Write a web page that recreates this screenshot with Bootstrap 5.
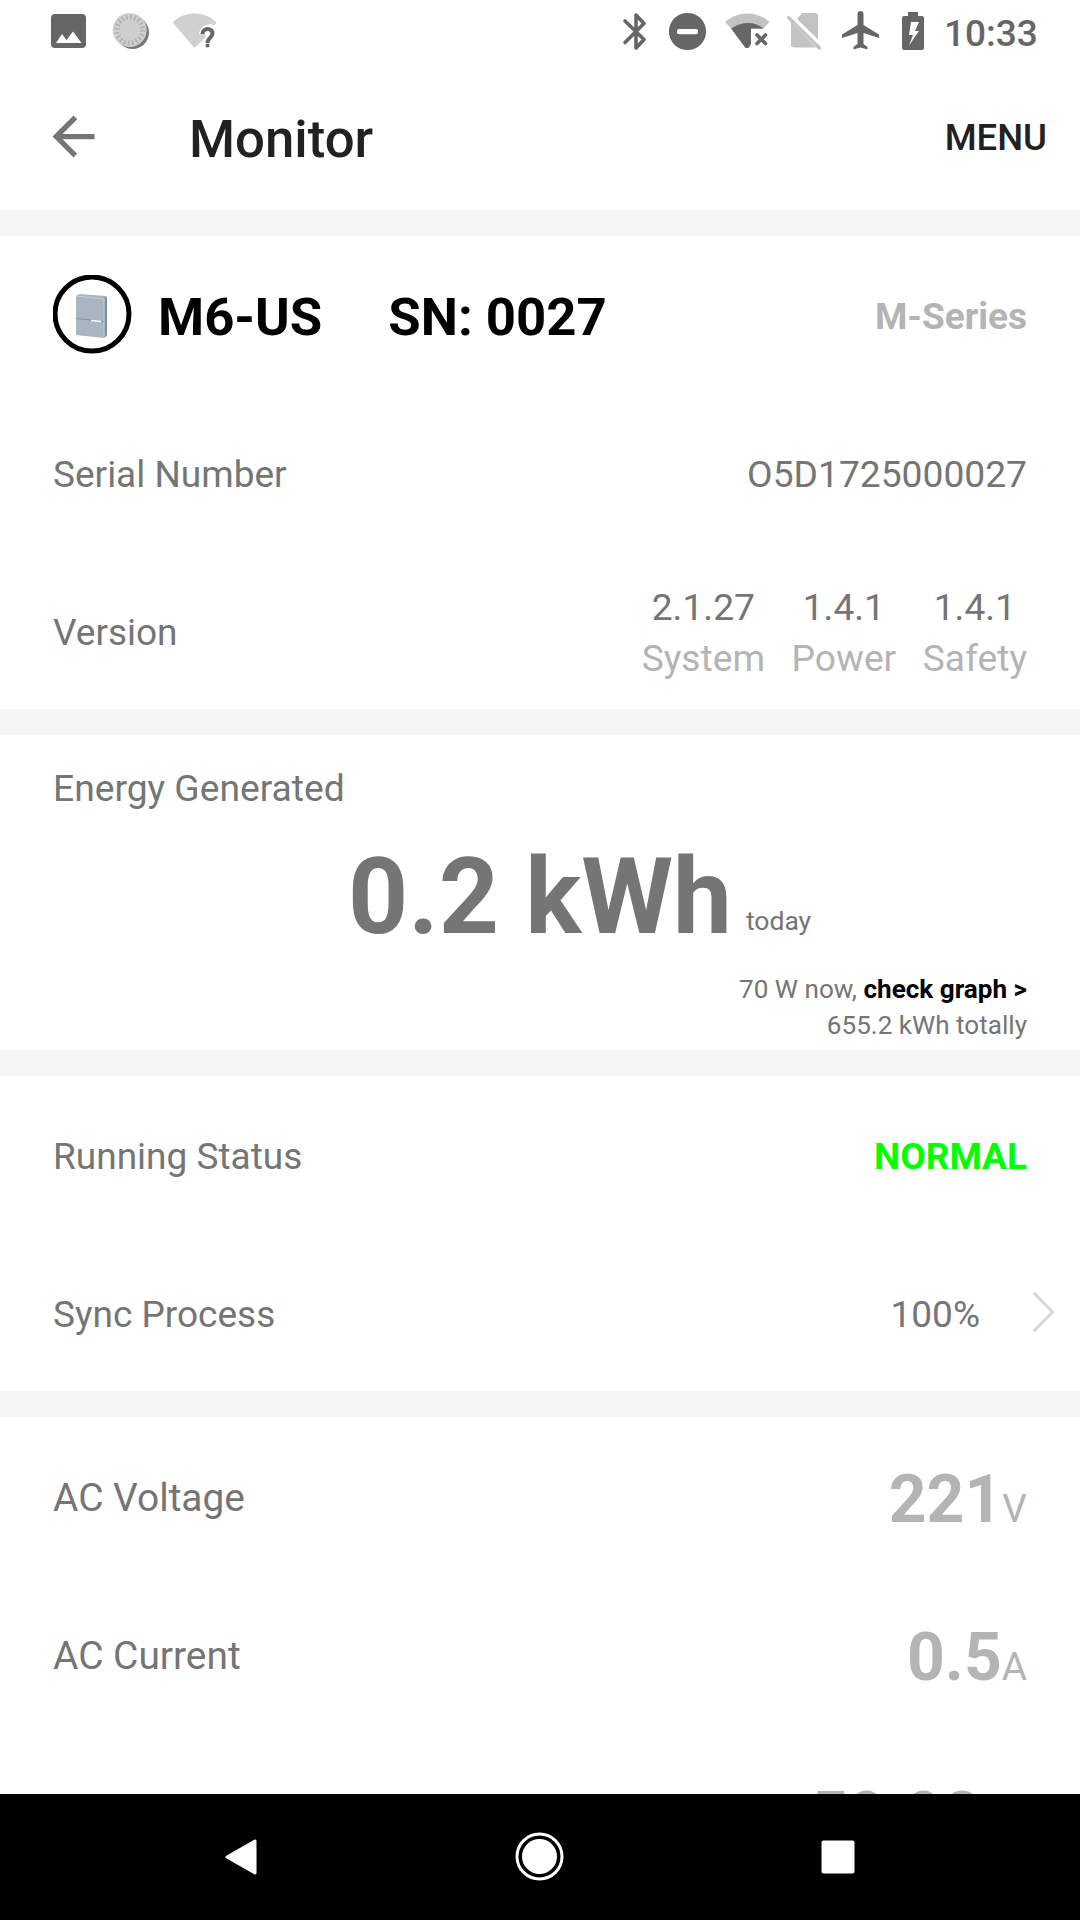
<!DOCTYPE html>
<html lang="en">
<head>
<meta charset="utf-8">
<meta name="viewport" content="width=device-width, initial-scale=1">
<title>Monitor</title>
<link href="https://cdn.jsdelivr.net/npm/bootstrap@5.3.0/dist/css/bootstrap.min.css" rel="stylesheet">
<style>
  body { font-family: Roboto, "Liberation Sans", sans-serif; font-size: 37px; line-height: 43px; color: #757575; background: #fff; }
  .screen { width: 1080px; height: 1920px; }
  svg { display: block; flex: none; }
  .status-strip { height: 63px; color: #666; }
  .status-strip .clock { width: 136px; font-weight: 500; padding-top: 3px; }
  .app-header { height: 147px; padding: 0 33px 0 42px; color: #212121; font-weight: 500; }
  .app-title { font-size: 52.7px; line-height: 62px; font-weight: 500; margin: 4px 0 0 84px; }
  .menu-label { font-size: 36.5px; padding-top: 2px; }
  .band { border-top: 26px solid #f5f5f5; }
  .item { height: 157.5px; padding: 0 53px; flex: none; }
  .item > span { padding-top: 5px; }
  .item > .series { padding-top: 3px; }
  .device-name { font-size: 52.7px; line-height: 62px; color: #000; padding: 4px 0 0 26px; }
  .serial-short { margin-left: 66px; }
  .soft { color: #b4b4b4; }
  .serial-full { font-size: 37.2px; }
  .versions { font-size: 37.2px; gap: 26.5px; line-height: 51px; padding-top: 6px; }
  .energy { height: 315px; padding: 32px 53px 0; }
  .energy-label { font-size: 37.2px; }
  .energy-total { display: grid; grid-template-columns: 1fr auto 1fr; font-size: 105px; line-height: 123px; margin-top: 26px; }
  .energy-note { font-size: 26.1px; line-height: 36px; }
  .energy-total .energy-note { font-size: 26.5px; padding: 0 0 20px 14px; }
  .energy-foot { margin-top: 12px; }
  .ok { color: #0f0; }
  .with-arrow { padding-right: 25px; }
  .percent { padding-top: 5px; }
  .arrow-gap { margin-left: 52px; }
  .item > .reading { font-size: 66px; line-height: 77px; padding-top: 18px; }
  .item > .reading-last { padding: 12px 46px 0 0; }
  .reading small { font-size: 38.7px; font-weight: 400; }
  .ac-label { font-size: 38.9px; }
  .nav-keys { height: 126px; background: #000; }
</style>
<script src="https://cdn.jsdelivr.net/npm/bootstrap@5.3.0/dist/js/bootstrap.bundle.min.js"></script>
</head>
<body>
<div class="screen d-flex flex-column overflow-hidden">
  <div class="status-strip d-flex align-items-center justify-content-between flex-shrink-0">
    <div class="d-flex">
      <svg width="230" height="63" viewBox="0 0 230 63">
        <path fill="#666" fill-rule="evenodd" d="M55 14h27a4 4 0 0 1 4 4v26a4 4 0 0 1-4 4H55a4 4 0 0 1-4-4V18a4 4 0 0 1 4-4zM56 43h25.500L73 31.500l-6.500 8.500-4.500-6z"/>
        <circle cx="132.500" cy="32.500" r="16.500" fill="#777"/>
        <circle cx="129.700" cy="30" r="17" fill="#cfcfcf"/>
        <circle cx="129.700" cy="30" r="13" fill="none" stroke="#b2b2b2" stroke-width="5" stroke-dasharray="1.700 2.384"/>
        <path fill="#d0d0d0" d="M172.500 22.500C184 10.500 205 10.500 216.500 22.500L214 25.500C208 22 200 26 199 34h6l1 3-11.500 11z"/>
        <path fill="none" stroke="#666" stroke-width="4" d="M202.500 34c0-7 10-6.500 10-.5 0 4.500-5 4-5 9.500"/>
        <circle cx="207.500" cy="45.500" r="2" fill="#666"/>
      </svg>
    </div>
    <div class="d-flex align-items-center">
      <svg width="332" height="63" viewBox="612 0 332 63">
        <path fill="none" stroke="#666" stroke-width="3.600" stroke-linecap="round" stroke-linejoin="round" d="M625 21l19 18.500-8 8.500V15l8 8.500L625 42.500"/>
        <circle cx="687.500" cy="31.500" r="18.600" fill="#666"/>
        <rect x="677" y="29" width="21" height="5.200" rx="2" fill="#fff"/>
        <path fill="#c3c3c3" d="M725 22C738 10.500 757 10.500 769.500 22L763 29H742L731 28.500z"/>
        <path fill="#666" d="M731 28.500C741 21 756 21 763.500 28.500H751V44l-2.500 4h-3z"/>
        <path fill="none" stroke="#666" stroke-width="3.600" stroke-linecap="round" d="M757 35l8.500 8.500M765.500 35L757 43.500"/>
        <path fill="#c3c3c3" d="M802 13h13a3 3 0 0 1 3 3v26.500L797 19zM791 22L816 47.500H794a3 3 0 0 1-3-3z"/>
        <path stroke="#fff" stroke-width="3" d="M791 15L823 46.500"/>
        <path stroke="#c3c3c3" stroke-width="3.200" stroke-linecap="round" d="M788.500 17.500L819.500 48"/>
        <path fill="#666" d="M860.500 11a3 3 0 0 1 3 3v11L879 34.500v3.500l-15.500-5v11l4 3v2.500l-7-2-7 2V47l4-3V33L842 38v-3.500L857.500 25V14a3 3 0 0 1 3-3z"/>
        <path fill="#666" fill-rule="evenodd" d="M908 12h10v4h4a2 2 0 0 1 2 2v30a2 2 0 0 1-2 2h-18a2 2 0 0 1-2-2V18a2 2 0 0 1 2-2h4zM911 22l-2 13h4l-4 10.500L919 31h-4l4-9z"/>
      </svg>
      <div class="clock">10:33</div>
    </div>
  </div>

  <header class="app-header d-flex align-items-center justify-content-between flex-shrink-0">
    <div class="d-flex align-items-center">
      <svg width="63" height="63" viewBox="0 0 24 24" fill="#757575"><path d="M20 11H7.830l5.590-5.590L12 4l-8 8 8 8 1.410-1.410L7.830 13H20z"/></svg>
      <h1 class="app-title">Monitor</h1>
    </div>
    <span class="menu-label">MENU</span>
  </header>

  <main class="flex-grow-1 overflow-hidden">
    <section class="band">
      <div class="item d-flex align-items-center justify-content-between">
        <div class="d-flex align-items-center">
          <svg width="79" height="79" viewBox="0 0 79 79">
            <circle cx="39" cy="39" r="37" fill="#fff" stroke="#000" stroke-width="5"/>
            <path fill="#a7b6c0" d="M23 21l3-2 27 2 1 3v36l-3 3-28-3z"/>
            <path fill="#78909c" d="M51.500 24l1.500-3 1 3v36l-2.500 3z"/>
            <path fill="none" stroke="#c5d0d6" d="M23 21l28 3v38"/>
            <path stroke="#8496a0" d="M23 43.500l28 3"/>
            <path stroke="#fff" stroke-width="1.500" d="M38 45.500l10 1"/>
          </svg>
          <div class="device-name fw-bold d-flex"><span>M6-US</span><span class="serial-short">SN: 0027</span></div>
        </div>
        <span class="series soft fw-bold">M-Series</span>
      </div>
      <div class="item d-flex align-items-center justify-content-between"><span>Serial Number</span><span class="serial-full">O5D1725000027</span></div>
      <div class="item d-flex align-items-center justify-content-between">
        <span>Version</span>
        <div class="versions d-flex text-center">
          <div>2.1.27<div class="soft">System</div></div>
          <div>1.4.1<div class="soft">Power</div></div>
          <div>1.4.1<div class="soft">Safety</div></div>
        </div>
      </div>
    </section>

    <section class="band">
      <div class="energy">
        <div class="energy-label">Energy Generated</div>
        <div class="energy-total"><span></span><span class="fw-bold">0.2 kWh</span><span class="energy-note align-self-end">today</span></div>
        <div class="energy-note energy-foot text-end">70 W now, <a href="#" class="fw-bold text-black text-decoration-none">check graph &gt;</a><br>655.2 kWh totally</div>
      </div>
    </section>

    <section class="band">
      <div class="item d-flex align-items-center justify-content-between"><span>Running Status</span><span class="ok fw-bold">NORMAL</span></div>
      <div class="item with-arrow d-flex align-items-center justify-content-between">
        <span>Sync Process</span>
        <div class="d-flex align-items-center"><span class="percent">100%</span>
          <svg class="arrow-gap" width="23" height="42" viewBox="0 0 23 42"><path fill="none" stroke="#d6d6d6" stroke-width="3" d="M2 2l18.500 19L2 40"/></svg>
        </div>
      </div>
    </section>

    <section class="band">
      <div class="item d-flex align-items-center justify-content-between"><span class="ac-label">AC Voltage</span><span class="reading soft fw-bold">221<small>V</small></span></div>
      <div class="item d-flex align-items-center justify-content-between"><span class="ac-label">AC Current</span><span class="reading soft fw-bold">0.5<small>A</small></span></div>
      <div class="item d-flex align-items-center justify-content-end"><span class="reading reading-last soft fw-bold">59.98</span></div>
    </section>
  </main>

  <nav class="nav-keys flex-shrink-0">
    <svg width="1080" height="126" viewBox="0 1794 1080 126" fill="#fff">
      <path stroke="#fff" stroke-width="3" stroke-linejoin="round" d="M227 1857l28-16v32z"/>
      <circle cx="539.500" cy="1856.500" r="22.500" fill="none" stroke="#fff" stroke-width="3"/>
      <circle cx="539.500" cy="1856.500" r="17.500"/>
      <rect x="821.500" y="1840.500" width="33" height="33" rx="2"/>
    </svg>
  </nav>
</div>
</body>
</html>
